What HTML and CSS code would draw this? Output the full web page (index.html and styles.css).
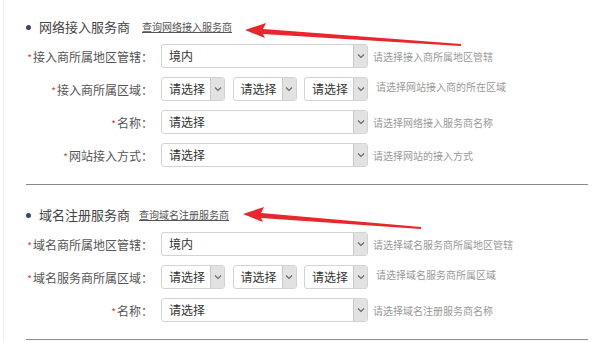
FILE: index.html
```html
<!DOCTYPE html>
<html lang="zh-CN">
<head>
<meta charset="utf-8">
<title>服务商</title>
<link rel="stylesheet" href="styles.css">
</head>
<body>
<div class="page">
  <section class="sec">
    <div class="sec-head">
      <span class="dot"></span>
      <h2 class="sec-title">网络接入服务商</h2>
      <a class="sec-link" href="#">查询网络接入服务商</a>
    </div>
    <div class="rows">
      <div class="row">
        <label class="lbl"><i>*</i>接入商所属地区管辖：</label>
        <div class="sel wide"><span class="val">境内</span><span class="caret"><svg viewBox="0 0 8 6" width="8" height="6"><path d="M1 1.5 L4 4.5 L7 1.5" fill="none" stroke="#666" stroke-width="1.1"/></svg></span></div>
        <span class="hint">请选择接入商所属地区管辖</span>
      </div>
      <div class="row">
        <label class="lbl"><i>*</i>接入商所属区域：</label>
        <div class="trio">
          <div class="sel"><span class="val">请选择</span><span class="caret"><svg viewBox="0 0 8 6" width="8" height="6"><path d="M1 1.5 L4 4.5 L7 1.5" fill="none" stroke="#666" stroke-width="1.1"/></svg></span></div>
          <div class="sel"><span class="val">请选择</span><span class="caret"><svg viewBox="0 0 8 6" width="8" height="6"><path d="M1 1.5 L4 4.5 L7 1.5" fill="none" stroke="#666" stroke-width="1.1"/></svg></span></div>
          <div class="sel"><span class="val">请选择</span><span class="caret"><svg viewBox="0 0 8 6" width="8" height="6"><path d="M1 1.5 L4 4.5 L7 1.5" fill="none" stroke="#666" stroke-width="1.1"/></svg></span></div>
        </div>
        <span class="hint hint-up">请选择网站接入商的所在区域</span>
      </div>
      <div class="row">
        <label class="lbl"><i>*</i>名称：</label>
        <div class="sel wide"><span class="val">请选择</span><span class="caret"><svg viewBox="0 0 8 6" width="8" height="6"><path d="M1 1.5 L4 4.5 L7 1.5" fill="none" stroke="#666" stroke-width="1.1"/></svg></span></div>
        <span class="hint">请选择网络接入服务商名称</span>
      </div>
      <div class="row">
        <label class="lbl"><i>*</i>网站接入方式：</label>
        <div class="sel wide"><span class="val">请选择</span><span class="caret"><svg viewBox="0 0 8 6" width="8" height="6"><path d="M1 1.5 L4 4.5 L7 1.5" fill="none" stroke="#666" stroke-width="1.1"/></svg></span></div>
        <span class="hint">请选择网站的接入方式</span>
      </div>
    </div>
    <hr class="divider">
  </section>

  <section class="sec sec2">
    <div class="sec-head">
      <span class="dot"></span>
      <h2 class="sec-title">域名注册服务商</h2>
      <a class="sec-link link2" href="#">查询域名注册服务商</a>
    </div>
    <div class="rows">
      <div class="row">
        <label class="lbl"><i>*</i>域名商所属地区管辖：</label>
        <div class="sel wide"><span class="val">境内</span><span class="caret"><svg viewBox="0 0 8 6" width="8" height="6"><path d="M1 1.5 L4 4.5 L7 1.5" fill="none" stroke="#666" stroke-width="1.1"/></svg></span></div>
        <span class="hint">请选择域名服务商所属地区管辖</span>
      </div>
      <div class="row">
        <label class="lbl"><i>*</i>域名服务商所属区域：</label>
        <div class="trio">
          <div class="sel"><span class="val">请选择</span><span class="caret"><svg viewBox="0 0 8 6" width="8" height="6"><path d="M1 1.5 L4 4.5 L7 1.5" fill="none" stroke="#666" stroke-width="1.1"/></svg></span></div>
          <div class="sel"><span class="val">请选择</span><span class="caret"><svg viewBox="0 0 8 6" width="8" height="6"><path d="M1 1.5 L4 4.5 L7 1.5" fill="none" stroke="#666" stroke-width="1.1"/></svg></span></div>
          <div class="sel"><span class="val">请选择</span><span class="caret"><svg viewBox="0 0 8 6" width="8" height="6"><path d="M1 1.5 L4 4.5 L7 1.5" fill="none" stroke="#666" stroke-width="1.1"/></svg></span></div>
        </div>
        <span class="hint hint-up">请选择域名服务商所属区域</span>
      </div>
      <div class="row">
        <label class="lbl"><i>*</i>名称：</label>
        <div class="sel wide"><span class="val">请选择</span><span class="caret"><svg viewBox="0 0 8 6" width="8" height="6"><path d="M1 1.5 L4 4.5 L7 1.5" fill="none" stroke="#666" stroke-width="1.1"/></svg></span></div>
        <span class="hint">请选择域名注册服务商名称</span>
      </div>
    </div>
    <hr class="divider">
  </section>

  <svg class="arrows" width="600" height="342" viewBox="0 0 600 342">
    <polygon points="244,30 265,23 262,29 460,44 460,46 262,34 264,38" fill="#e8262b"/>
    <polygon points="242,214 263,207 260,213 420,227 420,229 260,218 262,222" fill="#e8262b"/>
  </svg>
</div>
</body>
</html>
```
FILE: styles.css
```css
* { box-sizing: border-box; }
html, body { margin: 0; padding: 0; background: #fff; }
body {
  font-family: "Noto Sans CJK SC", "Microsoft YaHei", "Liberation Sans", sans-serif;
  color: #444;
  width: 600px;
  height: 342px;
  overflow: hidden;
}
.page {
  position: relative;
  padding: 17px 12px 0 22px;
  border-left: 1px solid #eee;
  margin-left: 3px;
}
.sec-head {
  display: flex;
  align-items: center;
  height: 20px;
}
.dot {
  width: 5px;
  height: 5px;
  border-radius: 50%;
  background: #3b4170;
  margin-left: 0;
  margin-right: 8px;
}
.sec-title {
  margin: 0;
  font-size: 13px;
  font-weight: normal;
  color: #444;
  line-height: 20px;
}
.sec-link {
  margin-left: 12px;
  font-size: 10px;
  color: #555;
  text-decoration: underline;
  line-height: 20px;
}
.link2 { margin-left: 9px; }
.rows {
  margin-top: 7px;
  display: flex;
  flex-direction: column;
  gap: 9px;
}
.row {
  display: grid;
  grid-template-columns: 127px 207px auto;
  column-gap: 8px;
  align-items: center;
  height: 24px;
}
.lbl {
  text-align: right;
  font-size: 12px;
  color: #555;
  white-space: nowrap;
  padding-right: 0;
}
.lbl i {
  font-style: normal;
  color: #e0393e;
  font-size: 10px;
  margin-right: 1px;
}
.sel {
  display: flex;
  height: 24px;
  border: 1px solid #d3d3d3;
  border-radius: 3px;
  background: #fff;
  overflow: hidden;
}
.sel .val {
  flex: 1;
  font-size: 12px;
  color: #333;
  padding-left: 7px;
  line-height: 22px;
}
.sel .caret {
  width: 14px;
  background: #e2e2e2;
  border-left: 1px solid #c8c8c8;
  display: flex;
  align-items: center;
  justify-content: center;
}
.trio {
  display: grid;
  grid-template-columns: 64px 64px 64px;
  column-gap: 7.5px;
}
.hint {
  font-size: 10px;
  color: #999;
  white-space: nowrap;
  margin-left: -3px;
}
.hint-up { margin-left: 0; margin-top: -6px; }
.divider {
  margin: 17px 0 0 0;
  border: 0;
  border-top: 1px solid #8a8a8a;
  height: 0;
}
.sec2 { margin-top: 20px; }
.arrows {
  position: absolute;
  left: -3px;
  top: 0;
  pointer-events: none;
}
```
